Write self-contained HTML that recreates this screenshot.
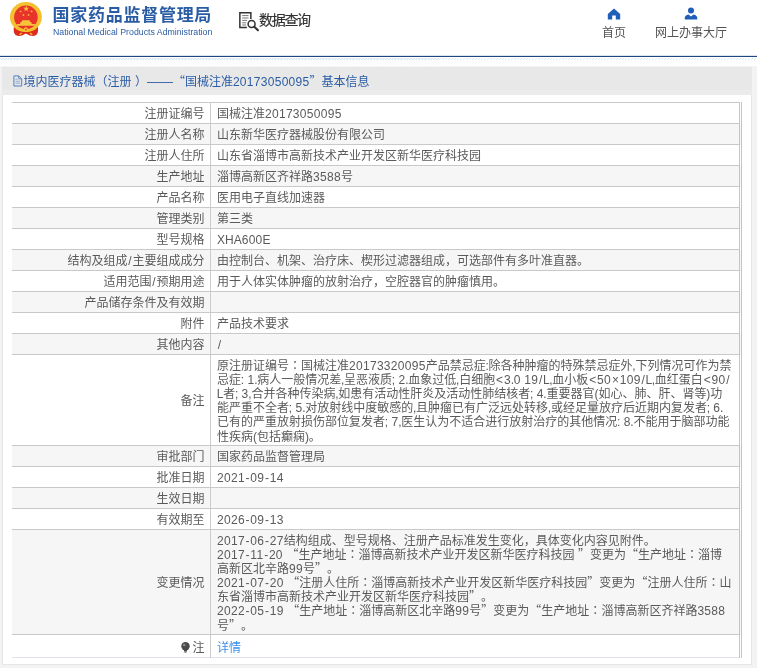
<!DOCTYPE html>
<html lang="zh-CN">
<head>
<meta charset="utf-8">
<title>国家药品监督管理局 数据查询</title>
<style>
html,body{margin:0;padding:0;}
body{width:757px;height:668px;overflow:hidden;background:#fff;position:relative;
  font-family:"Liberation Sans","Noto Sans CJK SC",sans-serif;font-size:12px;color:#5a5a5a;text-spacing-trim:space-all;}
.q{font-family:"Noto Sans CJK SC",sans-serif;line-height:0;}
.d{letter-spacing:.29px;}
.s{letter-spacing:.21px;}
.p{margin:0 -.265px;}
.f{margin:0 .85px;}
.h{margin:0 .75px;}
.m{margin:0 .9px;}
.L{margin:0 -.28px;}
.b{margin:0 -.05px;}
.c{font-family:"Noto Sans CJK JP",sans-serif;line-height:0;}
#wrap{position:absolute;left:0;top:0;width:757px;height:668px;will-change:transform;}
#top{position:absolute;left:0;top:0;width:757px;height:56px;background:#fff;}
#bar{position:absolute;left:0;top:55px;width:757px;height:2px;background:linear-gradient(#dde3ee 0,#dde3ee 1px,#224680 1px,#224680 2px);}
#hatch{position:absolute;left:0;top:58px;width:757px;height:2px;background:repeating-linear-gradient(135deg,#c3d2ea 0,#c3d2ea 0.9px,#fff 0.9px,#fff 2.12px);opacity:.55}
#hatch2{position:absolute;left:0;top:60px;width:757px;height:5px;background:repeating-linear-gradient(45deg,#eef1f7 0,#eef1f7 0.9px,#fff 0.9px,#fff 2.12px);opacity:.35}
#bg{position:absolute;left:0;top:66px;width:757px;height:602px;background:#f3f3f3;}
#emblem{position:absolute;left:9px;top:1px;}
#t1{position:absolute;left:52.6px;top:3.5px;font-size:17px;line-height:24px;font-weight:bold;color:#2a5ca5;white-space:nowrap;letter-spacing:.72px;}
#t2{position:absolute;left:53px;top:26.3px;font-size:8.78px;line-height:12px;transform:scale(1,1.08);transform-origin:0 50%;color:#2a5ca5;white-space:nowrap;}
#sq{position:absolute;left:259px;top:11px;font-size:14px;line-height:18px;color:#333;white-space:nowrap;letter-spacing:-1.3px;-webkit-text-stroke:.2px #333;}
#sqi{position:absolute;left:238px;top:11px;}
.nav{position:absolute;top:25px;font-size:12px;line-height:16px;color:#555;white-space:nowrap;}
#panel{position:absolute;left:2px;top:66.5px;width:750px;height:598.5px;background:#fff;box-shadow:inset 0 0 0 1px #e6e6e6;}
#ph{position:absolute;left:0;top:0;width:750px;height:28px;background:linear-gradient(#e8e8e8 0,#e8e8e8 23px,#ebebeb 23px);}
#pt{position:absolute;left:21.5px;top:7.5px;font-size:12px;line-height:16px;color:#2a5ca5;white-space:nowrap;}
#pi{position:absolute;left:10.85px;top:8.95px;}
table{position:absolute;left:10px;top:35.9px;width:730px;border-collapse:collapse;table-layout:fixed;
  border-top:1px solid #c9c9c9;border-right:3px double #c4c4c4;border-bottom:1px solid #dfe2ea;}
td{padding:3.5px 5px 1.5px 6px;line-height:14.14px;height:15px;border-bottom:1px solid #c9c9c9;vertical-align:middle;white-space:nowrap;}
td.l{width:185.5px;text-align:right;border-right:1px solid #ccc;padding:3.5px 5.5px 1.5px 7px;}
tr:nth-child(even) td{background:#f6f6f6;}
tr:last-child td{border-bottom:none;padding-top:5.5px;padding-bottom:2.2px;height:auto;}
a{color:#3d8fe9;text-decoration:none;}
</style>
</head>
<body>
<div id="wrap">
<div id="top">
  <svg id="emblem" width="36" height="38" viewBox="0 0 36 38">
    <path d="M5.2 24 Q3.6 31.5 6.5 34 Q9.5 35.6 13 34.6 L16.9 32.4 L20.8 34.6 Q24.3 35.6 27.3 34 Q30.2 31.5 28.6 24 Z" fill="#dc2a1d"/>
    <ellipse cx="16.9" cy="16.1" rx="16" ry="15" fill="#f5c02f"/>
    <circle cx="16.9" cy="16.3" r="11.8" fill="#e8332a"/>
    <path d="M8 24.8 H25.8 V23 H22.6 V21.2 H21.4 L20.4 19.2 H13.4 L12.4 21.2 H11.2 V23 H8 Z" fill="#f6c63a"/>
    <path d="M17.2 4.6 l0.75 2.1 h2.2 l-1.75 1.35 l0.65 2.15 l-1.85 -1.3 l-1.85 1.3 l0.65 -2.15 l-1.75 -1.35 h2.2z" fill="#f6c63a"/>
    <circle cx="11.6" cy="10.4" r="0.95" fill="#f2b43a"/><circle cx="22.6" cy="10.4" r="0.95" fill="#f2b43a"/>
    <circle cx="14.4" cy="14" r="0.95" fill="#f2b43a"/><circle cx="19.6" cy="14" r="0.95" fill="#f2b43a"/>
    <path d="M6.5 25.2 Q16.9 32.5 27.3 25.2 L26.6 28 Q16.9 34 7.2 28 Z" fill="#f5c02f"/>
    <circle cx="16.9" cy="28.6" r="2.3" fill="#f5c02f"/><circle cx="16.9" cy="28.6" r="1" fill="#e8532a"/>
    <path d="M10 33.2 L12.4 31.4 L13.2 32.6 L11 34.2 Z M23.8 33.2 L21.4 31.4 L20.6 32.6 L22.8 34.2 Z" fill="#f5c02f"/>
  </svg>
  <div id="t1">国家药品监督管理局</div>
  <div id="t2">National Medical Products Administration</div>
  <svg id="sqi" width="24" height="22" viewBox="0 0 24 22" fill="none" stroke="#333" stroke-width="1.5">
    <path d="M12.85 8 V1.85 H1.85 V16.45 H8.9"/>
    <path d="M4.2 4.6 H10.6 M4.2 7 H10.6 M4.2 9.4 H9 M4.2 11.8 H8.2 M4.2 14 H8" stroke-width="1" stroke="#777"/>
    <circle cx="13.6" cy="13" r="3.5" stroke-width="1.5"/>
    <path d="M16.3 15.7 L19.9 19.2" stroke-width="2.1" stroke-linecap="round"/>
  </svg>
  <div id="sq">数据查询</div>
  <svg style="position:absolute;left:607px;top:7.7px" width="14" height="12" viewBox="0 0 14 12"><path d="M7 0.5 L0.8 6 V11.5 H5.2 V7.5 H8.8 V11.5 H13.2 V6 Z" fill="#1f5fb8"/></svg>
  <div class="nav" style="left:602px">首页</div>
  <svg style="position:absolute;left:684.3px;top:6.6px" width="14" height="13" viewBox="0 0 14 13"><circle cx="7" cy="3.6" r="3" fill="#1f5fb8"/><path d="M0.8 12.6 V10 Q2 7.6 4.5 7.4 L7 9.5 L9.5 7.4 Q12 7.6 13.2 10 V12.6 Z" fill="#1f5fb8"/></svg>
  <div class="nav" style="left:655px">网上办事大厅</div>
</div>
<div id="bar"></div>
<div id="hatch"></div>
<div id="hatch2"></div>
<div id="bg"></div>
<div id="panel">
  <div id="ph"></div>
  <svg id="pi" width="10" height="12" viewBox="0 0 10 12" fill="none" stroke="#4a7abf" stroke-width=".95"><path d="M0.9 0.9 H5.7 L8.7 3.9 V11 H0.9 Z"/><path d="M5.7 0.9 V3.9 H8.7" stroke-width=".8"/><path d="M2.5 4.3 H4.6 M2.5 6.3 H7.2 M2.5 8.3 H7.2" stroke-width=".8" stroke="#7b9fd0"/></svg>
  <div id="pt">境内医疗器械（注册<span style="position:relative;left:3.5px">）</span> <span style="display:inline-block;transform:scaleX(1.085);transform-origin:0 50%;margin-right:2px">——</span><span class="q">“</span>国械注准<span class="d">20173050095</span><span class="q">”</span>基本信息</div>
  <table>
    <tr><td class="l">注册证编号</td><td>国械注准<span class="d">20173050095</span></td></tr>
    <tr><td class="l">注册人名称</td><td>山东新华医疗器械股份有限公司</td></tr>
    <tr><td class="l">注册人住所</td><td>山东省淄博市高新技术产业开发区新华医疗科技园</td></tr>
    <tr><td class="l">生产地址</td><td>淄博高新区齐祥路<span class="d">3588</span>号</td></tr>
    <tr><td class="l">产品名称</td><td>医用电子直线加速器</td></tr>
    <tr><td class="l">管理类别</td><td>第三类</td></tr>
    <tr><td class="l">型号规格</td><td>XHA<span class="d">600</span>E</td></tr>
    <tr><td class="l">结构及组成<span class="f">/</span>主要组成成分</td><td>由控制台、机架、治疗床、楔形过滤器组成，可选部件有多叶准直器。</td></tr>
    <tr><td class="l">适用范围<span class="f">/</span>预期用途</td><td>用于人体实体肿瘤的放射治疗，空腔器官的肿瘤慎用。</td></tr>
    <tr><td class="l">产品储存条件及有效期</td><td>&nbsp;</td></tr>
    <tr><td class="l">附件</td><td>产品技术要求</td></tr>
    <tr><td class="l">其他内容</td><td><span class="f">/</span></td></tr>
    <tr><td class="l">备注</td><td>原注册证编号<span class="c" lang="ja">：</span>国械注准<span class="d">20173320095</span>产品禁忌症<span class="p">:</span>除各种肿瘤的特殊禁忌症外<span class="p">,</span>下列情况可作为禁<br>忌症<span class="p">:</span><span class="s"> </span><span class="d">1</span><span class="p">.</span>病人一般情况差<span class="p">,</span>呈恶液质<span class="p">;</span><span class="s"> </span><span class="d">2</span><span class="p">.</span>血象过低<span class="p">,</span>白细胞<span class="m">&lt;</span><span class="d">3</span><span class="p">.</span><span class="d">0</span><span class="s"> </span><span class="d">19</span><span class="f">/</span><span class="L">L</span><span class="p">,</span>血小板<span class="m">&lt;</span><span class="d">50</span><span class="m">×</span><span class="d">109</span><span class="f">/</span><span class="L">L</span><span class="p">,</span>血红蛋白<span class="m">&lt;</span><span class="d">90</span><span class="f">/</span><br><span class="L">L</span>者<span class="p">;</span><span class="s"> </span><span class="d">3</span><span class="p">,</span>合并各种传染病<span class="p">,</span>如患有活动性肝炎及活动性肺结核者<span class="p">;</span><span class="s"> </span><span class="d">4</span><span class="p">.</span>重要器官<span class="b">(</span>如心、肺、肝、肾等<span class="b">)</span>功<br>能严重不全者<span class="p">;</span><span class="s"> </span><span class="d">5</span><span class="p">.</span>对放射线中度敏感的<span class="p">,</span>且肿瘤已有广泛远处转移<span class="p">,</span>或经足量放疗后近期内复发者<span class="p">;</span><span class="s"> </span><span class="d">6</span><span class="p">.</span><br>已有的严重放射损伤部位复发者<span class="p">;</span><span class="s"> </span><span class="d">7</span><span class="p">,</span>医生认为不适合进行放射治疗的其他情况<span class="p">:</span><span class="s"> </span><span class="d">8</span><span class="p">.</span>不能用于脑部功能<br>性疾病<span class="b">(</span>包括癫痫<span class="b">)</span>。</td></tr>
    <tr><td class="l">审批部门</td><td>国家药品监督管理局</td></tr>
    <tr><td class="l">批准日期</td><td><span class="d">2021</span><span class="h">-</span><span class="d">09</span><span class="h">-</span><span class="d">14</span></td></tr>
    <tr><td class="l">生效日期</td><td>&nbsp;</td></tr>
    <tr><td class="l">有效期至</td><td><span class="d">2026</span><span class="h">-</span><span class="d">09</span><span class="h">-</span><span class="d">13</span></td></tr>
    <tr><td class="l">变更情况</td><td><span class="d">2017</span><span class="h">-</span><span class="d">06</span><span class="h">-</span><span class="d">27</span>结构组成、型号规格、注册产品标准发生变化，具体变化内容见附件。<br><span class="d">2017</span><span class="h">-</span><span class="d">11</span><span class="h">-</span><span class="d">20</span><span class="s"> </span><span class="q">“</span>生产地址<span class="c" lang="ja">：</span>淄博高新技术产业开发区新华医疗科技园<span class="s"> </span><span class="q">”</span>变更为<span class="q">“</span>生产地址<span class="c" lang="ja">：</span>淄博<br>高新区北辛路<span class="d">99</span>号<span class="q">”</span>。<br><span class="d">2021</span><span class="h">-</span><span class="d">07</span><span class="h">-</span><span class="d">20</span><span class="s"> </span><span class="q">“</span>注册人住所<span class="c" lang="ja">：</span>淄博高新技术产业开发区新华医疗科技园<span class="q">”</span>变更为<span class="q">“</span>注册人住所<span class="c" lang="ja">：</span>山<br>东省淄博市高新技术产业开发区新华医疗科技园<span class="q">”</span>。<br><span class="d">2022</span><span class="h">-</span><span class="d">05</span><span class="h">-</span><span class="d">19</span><span class="s"> </span><span class="q">“</span>生产地址<span class="c" lang="ja">：</span>淄博高新区北辛路<span class="d">99</span>号<span class="q">”</span>变更为<span class="q">“</span>生产地址<span class="c" lang="ja">：</span>淄博高新区齐祥路<span class="d">3588</span><br>号<span class="q">”</span>。</td></tr>
    <tr><td class="l"><svg width="9" height="11" viewBox="0 0 9 11" style="vertical-align:-1.5px;margin-right:2px"><circle cx="4.5" cy="4.3" r="4.2" fill="#4a4a4a"/><path d="M3 8 H6 V9.6 H3 Z" fill="#4a4a4a"/><path d="M3.4 10.3 H5.6" stroke="#666" stroke-width=".8"/><circle cx="3.2" cy="3" r="1.3" fill="#8a8a8a"/></svg>注</td><td><a>详情</a></td></tr>
  </table>
</div>
</div>
</body>
</html>
